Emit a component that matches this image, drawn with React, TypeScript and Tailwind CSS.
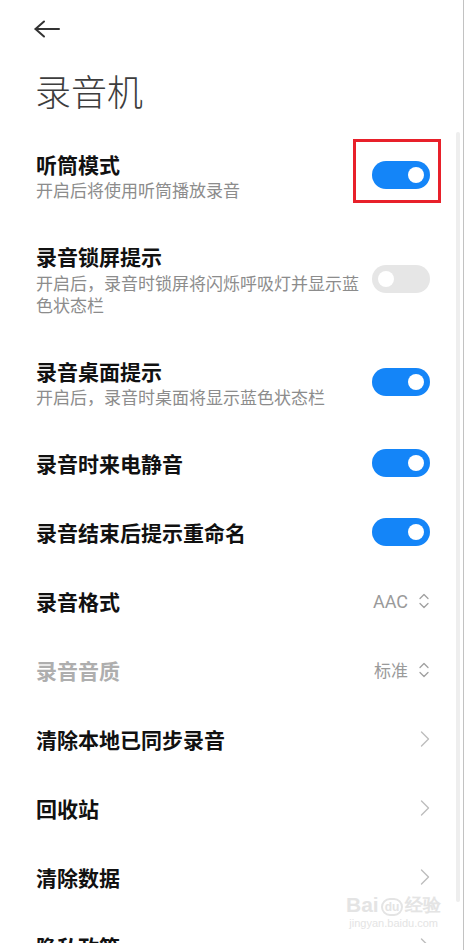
import React from "react";

type Row =
  | { kind: "toggle"; title: string; sub?: string; on: boolean; marked?: boolean }
  | { kind: "select"; title: string; value: string; disabled?: boolean }
  | { kind: "link"; title: string };

const rows: Row[] = [
  { kind: "toggle", title: "听筒模式", sub: "开启后将使用听筒播放录音", on: true, marked: true },
  { kind: "toggle", title: "录音锁屏提示", sub: "开启后，录音时锁屏将闪烁呼吸灯并显示蓝色状态栏", on: false },
  { kind: "toggle", title: "录音桌面提示", sub: "开启后，录音时桌面将显示蓝色状态栏", on: true },
  { kind: "toggle", title: "录音时来电静音", on: true },
  { kind: "toggle", title: "录音结束后提示重命名", on: true },
  { kind: "select", title: "录音格式", value: "AAC" },
  { kind: "select", title: "录音音质", value: "标准", disabled: true },
  { kind: "link", title: "清除本地已同步录音" },
  { kind: "link", title: "回收站" },
  { kind: "link", title: "清除数据" },
  { kind: "link", title: "隐私政策" },
];

const Toggle = ({ on, marked }: { on: boolean; marked?: boolean }) => (
  <div className="relative shrink-0">
    <div
      className={
        on
          ? "flex h-[28px] w-[58px] items-center justify-end rounded-full bg-[#1485f8] px-[6px]"
          : "flex h-[28px] w-[58px] items-center justify-start rounded-full bg-[#e6e6e6] px-[6px]"
      }
    >
      <div className="h-[16px] w-[16px] rounded-full bg-white" />
    </div>
    {/* red annotation box */}
    {marked && (
      <div className="absolute left-[-19px] top-[-22px] h-[64px] w-[88px] border-[3px] border-[#e8202a]" />
    )}
  </div>
);

const UpDown = () => (
  <svg width="12" height="18" viewBox="0 0 12 18" fill="none" stroke="#a0a0a0" strokeWidth="1.3" strokeLinecap="round" strokeLinejoin="round">
    <path d="M2 6.5 L6 2.5 L10 6.5" />
    <path d="M2 11.5 L6 15.5 L10 11.5" />
  </svg>
);

const Chevron = () => (
  <svg width="10" height="16" viewBox="0 0 10 16" fill="none" stroke="#bdbdbd" strokeWidth="1.4" strokeLinecap="round" strokeLinejoin="round">
    <path d="M1.5 1 L8.5 8 L1.5 15" />
  </svg>
);

export default function App() {
  return (
    <div className="relative h-[950px] w-[465px] overflow-hidden bg-white font-['Noto_Sans_CJK_SC','Noto_Sans',sans-serif]">
      <div className="h-[943px] overflow-hidden">
        {/* header */}
        <div className="flex h-[58px] items-center pl-[34px]">
          <svg width="26" height="18" viewBox="0 0 26 18" fill="none" stroke="#333" strokeWidth="2" strokeLinecap="round" strokeLinejoin="round">
            <path d="M1.5 9 L25 9" />
            <path d="M10 1.5 L1.5 9 L10 16.5" />
          </svg>
        </div>
        <h1 className="mt-[8px] h-[48px] pl-[35px] text-[36px] leading-[48px] font-light text-[#3d3d3d]">录音机</h1>

        {/* settings list */}
        <div className="pt-[15px]">
          {rows.map((r) => (
            <div key={r.title} className="flex items-center justify-between py-[20.5px] pl-[36px] pr-[35px]">
              <div className="min-w-0 flex-1 pr-[8px]">
                <div
                  className={
                    r.kind === "select" && r.disabled
                      ? "text-[21px] leading-[28px] font-semibold text-[#aeaeae]"
                      : "text-[21px] leading-[28px] font-semibold text-[#111]"
                  }
                >
                  {r.title}
                </div>
                {r.kind === "toggle" && r.sub && (
                  <div className="mt-[1.5px] text-[17px] leading-[22px] text-[#8c8c8c]">{r.sub}</div>
                )}
              </div>
              {r.kind === "toggle" && <Toggle on={r.on} marked={r.marked} />}
              {r.kind === "select" && (
                <div className="flex h-[28px] shrink-0 items-center gap-[10px] text-[17px] text-[#9a9a9a]">
                  <span className={r.value === "AAC" ? "font-['Roboto',sans-serif] text-[18px]" : ""}>{r.value}</span>
                  <UpDown />
                </div>
              )}
              {r.kind === "link" && <Chevron />}
            </div>
          ))}
        </div>
      </div>

      {/* scrollbar */}
      <div className="absolute left-[456px] top-[132px] h-[770px] w-[4px] rounded-full bg-[#eeeeee]" />
      <div className="absolute right-[1px] top-0 h-full w-[1.5px] bg-[#c2c2c2]" />

      {/* watermark */}
      <div className="pointer-events-none absolute left-[346px] top-[894px] flex flex-col items-center text-[#e4e4e4]">
        <div className="flex items-end gap-[2px] font-['Liberation_Sans',sans-serif]">
          <span className="text-[21px] leading-[22px] font-bold">Bai</span>
          <span className="rounded-full border-2 border-[#e4e4e4] px-[2px] text-[12px] leading-[14px] font-bold">du</span>
          <span className="text-[18px] leading-[22px] font-bold">经验</span>
        </div>
        <span className="text-[11px] leading-[14px] font-['Liberation_Sans',sans-serif]">jingyan.baidu.com</span>
      </div>
    </div>
  );
}
